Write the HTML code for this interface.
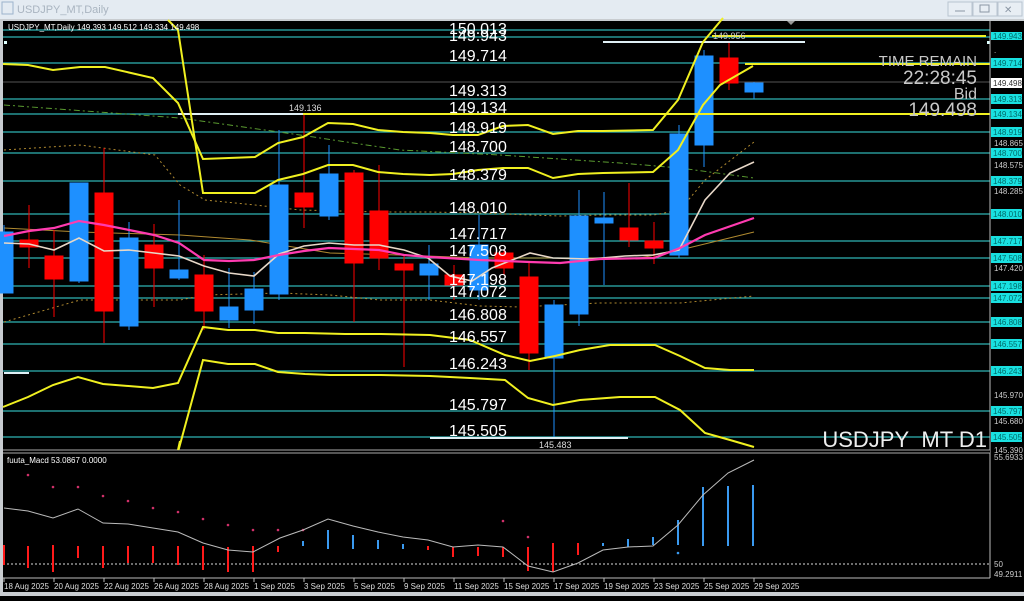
<!DOCTYPE html>
<html><head><meta charset="utf-8">
<style>
html,body{margin:0;padding:0;background:#000;}
body{width:1024px;height:596px;overflow:hidden;font-family:"Liberation Sans",sans-serif;}
svg text{font-family:"Liberation Sans",sans-serif;}
</style></head><body>
<svg width="1024" height="596" viewBox="0 0 1024 596" xmlns="http://www.w3.org/2000/svg">
<!-- title bar -->
<rect x="0" y="0" width="1024" height="19" fill="#e4ebf2"/>
<rect x="2" y="2" width="11" height="12" fill="none" stroke="#9db3cc"/>
<text x="17" y="13" font-size="11" fill="#a9b4c0">USDJPY_MT,Daily</text>
<rect x="948" y="2" width="24" height="14" fill="#e8eef4" stroke="#b9c4d0"/>
<rect x="973" y="2" width="24" height="14" fill="#e8eef4" stroke="#b9c4d0"/>
<rect x="998" y="2" width="24" height="14" fill="#e8eef4" stroke="#b9c4d0"/>
<line x1="955" y1="11" x2="965" y2="11" stroke="#8a96a4"/>
<rect x="980" y="5" width="9" height="7" fill="none" stroke="#8a96a4"/>
<text x="1004" y="13" font-size="10" fill="#8a96a4">✕</text>
<rect x="0" y="19" width="1024" height="2" fill="#c8ccd0"/>
<rect x="0" y="21" width="3" height="575" fill="#c8ccd0"/>
<rect x="0" y="592" width="1024" height="4" fill="#c8ccd0"/>
<rect x="3" y="21" width="1021" height="571" fill="#000"/>

<!-- horizontal level lines -->
<g stroke="#2fb3b3" stroke-width="1.3">
<line x1="3" y1="30" x2="990" y2="30"/><line x1="3" y1="37" x2="990" y2="37"/>
<line x1="3" y1="63" x2="990" y2="63"/><line x1="3" y1="99" x2="990" y2="99"/>
<line x1="3" y1="114" x2="990" y2="114"/><line x1="3" y1="132" x2="990" y2="132"/>
<line x1="3" y1="153" x2="990" y2="153"/><line x1="3" y1="181" x2="990" y2="181"/>
<line x1="3" y1="214" x2="990" y2="214"/><line x1="3" y1="241" x2="990" y2="241"/>
<line x1="3" y1="258" x2="990" y2="258"/><line x1="3" y1="286" x2="990" y2="286"/>
<line x1="3" y1="298" x2="990" y2="298"/><line x1="3" y1="322" x2="990" y2="322"/>
<line x1="3" y1="344" x2="990" y2="344"/><line x1="3" y1="371" x2="990" y2="371"/>
<line x1="3" y1="411" x2="990" y2="411"/><line x1="3" y1="437" x2="990" y2="437"/>
</g>
<line x1="3" y1="82" x2="990" y2="82" stroke="#555" stroke-width="1"/>

<!-- white lines -->
<g stroke="#dfeff5" stroke-width="2">
<line x1="178" y1="114" x2="303" y2="114"/>
<line x1="603" y1="42" x2="805" y2="42"/>
<line x1="430" y1="438" x2="628" y2="438"/>
<line x1="4" y1="373" x2="29" y2="373"/>
</g>
<rect x="4" y="41" width="3" height="3" fill="#dff"/>
<rect x="987" y="41" width="3" height="3" fill="#dff"/>

<!-- dotted / dashdot MAs -->
<polyline fill="none" stroke="#b08a30" stroke-width="1" stroke-dasharray="2,3" points="4,150 80,145 155,155 180,185 205,200 255,205 300,210 380,212 430,212 480,213 530,215 560,216 600,215 654,215 680,210 705,180 754,142"/>
<polyline fill="none" stroke="#b08a30" stroke-width="1" stroke-dasharray="2,3" points="4,322 80,300 180,300 205,295 280,293 330,295 380,300 430,300 480,306 520,307 560,305 600,303 680,303 754,296"/>
<polyline fill="none" stroke="#5a9a30" stroke-width="1" stroke-dasharray="6,3,2,3" points="4,105 180,118 300,135 400,150 500,155 620,163 680,168 754,178"/>
<polyline fill="none" stroke="#b08a30" stroke-width="1" points="4,228 80,232 180,235 250,240 330,253 400,255 480,258 560,258 640,258 680,250 754,232"/>

<!-- candles -->
<g stroke-width="1">
<g stroke="#1e90ff" fill="#1e90ff">
<line x1="4" y1="225" x2="4" y2="293"/><rect x="-5" y="232" width="18" height="61"/>
<line x1="79" y1="183" x2="79" y2="283"/><rect x="70" y="183" width="18" height="98"/>
<line x1="129" y1="222" x2="129" y2="330"/><rect x="120" y="238" width="18" height="88"/>
<line x1="179" y1="200" x2="179" y2="280"/><rect x="170" y="270" width="18" height="8"/>
<line x1="229" y1="268" x2="229" y2="328"/><rect x="220" y="307" width="18" height="13"/>
<line x1="254" y1="272" x2="254" y2="324"/><rect x="245" y="289" width="18" height="21"/>
<line x1="279" y1="130" x2="279" y2="300"/><rect x="270" y="185" width="18" height="109"/>
<line x1="329" y1="145" x2="329" y2="220"/><rect x="320" y="174" width="18" height="42"/>
<line x1="429" y1="245" x2="429" y2="300"/><rect x="420" y="264" width="18" height="11"/>
<line x1="479" y1="215" x2="479" y2="300"/><rect x="470" y="245" width="18" height="45"/>
<line x1="554" y1="300" x2="554" y2="437"/><rect x="545" y="305" width="18" height="53"/>
<line x1="579" y1="190" x2="579" y2="326"/><rect x="570" y="216" width="18" height="98"/>
<line x1="604" y1="192" x2="604" y2="285"/><rect x="595" y="218" width="18" height="5"/>
<line x1="679" y1="125" x2="679" y2="258"/><rect x="670" y="134" width="18" height="121"/>
<line x1="704" y1="50" x2="704" y2="167"/><rect x="695" y="56" width="18" height="89"/>
<line x1="754" y1="82" x2="754" y2="99"/><rect x="745" y="83" width="18" height="9"/>
</g>
<g stroke="#ff0000" fill="#ff0000">
<line x1="29" y1="205" x2="29" y2="268"/><rect x="20" y="240" width="18" height="7"/>
<line x1="54" y1="230" x2="54" y2="317"/><rect x="45" y="256" width="18" height="23"/>
<line x1="104" y1="148" x2="104" y2="343"/><rect x="95" y="193" width="18" height="118"/>
<line x1="154" y1="224" x2="154" y2="307"/><rect x="145" y="245" width="18" height="23"/>
<line x1="204" y1="255" x2="204" y2="330"/><rect x="195" y="275" width="18" height="36"/>
<line x1="304" y1="115" x2="304" y2="228"/><rect x="295" y="193" width="18" height="14"/>
<line x1="354" y1="170" x2="354" y2="322"/><rect x="345" y="173" width="18" height="90"/>
<line x1="379" y1="165" x2="379" y2="270"/><rect x="370" y="211" width="18" height="47"/>
<line x1="404" y1="255" x2="404" y2="367"/><rect x="395" y="264" width="18" height="6"/>
<line x1="454" y1="265" x2="454" y2="300"/><rect x="445" y="275" width="18" height="10"/>
<line x1="504" y1="250" x2="504" y2="275"/><rect x="495" y="253" width="18" height="15"/>
<line x1="529" y1="262" x2="529" y2="370"/><rect x="520" y="277" width="18" height="76"/>
<line x1="629" y1="183" x2="629" y2="247"/><rect x="620" y="228" width="18" height="12"/>
<line x1="654" y1="222" x2="654" y2="264"/><rect x="645" y="241" width="18" height="7"/>
<line x1="729" y1="43" x2="729" y2="90"/><rect x="720" y="58" width="18" height="25"/>
</g>
</g>

<!-- MAs -->
<polyline fill="none" stroke="#e8d8c8" stroke-width="1.6" points="4,243 29,244 54,250 79,238 104,251 129,250 154,253 179,256 204,266 229,273 254,276 279,254 304,246 329,243 354,245 379,245 404,250 428,258 450,276 472,281 492,268 530,253 553,258 590,259 625,256 653,255 679,250 705,200 730,173 754,162"/>
<polyline fill="none" stroke="#ff3bb0" stroke-width="2.2" points="4,236 29,231 54,228 79,221 104,225 129,230 154,235 179,243 204,260 229,261 254,260 279,255 304,251 329,248 354,249 379,250 404,255 430,257 480,260 530,262 560,263 600,259 654,258 680,248 705,235 754,218"/>

<!-- envelope yellow -->
<g fill="none" stroke="#f0f020" stroke-width="2">
<polyline points="3,64 28,65 53,70 80,67 105,67 153,78 178,103 203,159 255,157 278,143 303,137 328,123 353,124 378,130 403,132 430,133 453,135 478,135 503,126 528,125 553,134 578,131 603,131 653,130 678,100 703,42 723,18"/>
<polyline points="168,20 178,30 203,193 255,193 278,180 303,174 328,165 353,165 378,172 403,174 430,175 453,174 478,170 503,168 528,168 553,178 578,174 603,173 653,172 678,150 703,105 720,85 753,66"/>
<polyline points="3,407 28,397 53,385 78,377 103,384 153,388 178,383 203,327 228,330 255,330 278,333 305,333 345,334 380,334 430,335 470,340 505,355 530,361 555,356 580,350 610,345 655,345 680,356 705,368 730,370 754,370"/>
<polyline points="178,452 203,360 228,364 255,364 278,372 305,374 330,375 380,375 430,376 470,378 505,380 528,398 553,405 580,400 620,397 655,397 680,410 705,433 730,440 754,447"/>
<line x1="303" y1="114" x2="990" y2="114"/>
<line x1="745" y1="64" x2="990" y2="64"/>
<line x1="712" y1="36" x2="986" y2="36"/>
</g>

<!-- small labels -->
<text x="8" y="30" font-size="8" fill="#fff">USDJPY_MT,Daily  149.393 149.512 149.334 149.498</text>
<text x="289" y="111" font-size="9" fill="#ddd">149.136</text>
<text x="713" y="39" font-size="9" fill="#ccc">149.956</text>
<text x="539" y="448" font-size="9" fill="#ddd">145.483</text>
<polygon points="787,21 795,21 791,25" fill="#999"/>

<!-- center level labels -->
<g font-size="16" fill="#ffffff">
<text x="449" y="34">150.013</text><text x="449" y="41">149.943</text>
<text x="449" y="61">149.714</text><text x="449" y="96">149.313</text>
<text x="449" y="113">149.134</text><text x="449" y="133">148.919</text>
<text x="449" y="152">148.700</text><text x="449" y="180">148.379</text>
<text x="449" y="213">148.010</text><text x="449" y="239">147.717</text>
<text x="449" y="256">147.508</text><text x="449" y="285">147.198</text>
<text x="449" y="297">147.072</text><text x="449" y="320">146.808</text>
<text x="449" y="342">146.557</text><text x="449" y="369">146.243</text>
<text x="449" y="410">145.797</text><text x="449" y="436">145.505</text>
</g>

<!-- time remain -->
<g fill="#c8c8c8" text-anchor="end">
<text x="977" y="66" font-size="15">TIME REMAIN</text>
<text x="977" y="84" font-size="19">22:28:45</text>
<text x="977" y="99" font-size="16">Bid</text>
<text x="977" y="116" font-size="19">149.498</text>
<text x="987" y="447" font-size="22" fill="#eee">USDJPY_MT D1</text>
</g>

<!-- right axis -->
<rect x="990" y="21" width="34" height="571" fill="#000"/>
<line x1="990" y1="21" x2="990" y2="578" stroke="#bbb"/>
<g font-size="8" fill="#ccc">
<text x="994" y="53">.</text>
<text x="994" y="146">148.865</text><text x="994" y="168">148.575</text>
<text x="994" y="194">148.285</text><text x="994" y="271">147.420</text>
<text x="994" y="398">145.970</text><text x="994" y="424">145.680</text>
<text x="994" y="453">145.390</text><text x="994" y="460">55.6933</text>
<text x="994" y="567">50</text><text x="994" y="577">49.2911</text>
</g>
<g font-size="8" fill="#006a6a">
<rect x="991" y="32" width="31" height="8" fill="#19e0e0"/><text x="993" y="39">149.943</text>
<rect x="991" y="58" width="31" height="10" fill="#19e0e0"/><text x="993" y="66">149.714</text>
<rect x="991" y="78" width="31" height="10" fill="#fff"/><text x="993" y="86" fill="#333">149.498</text>
<rect x="991" y="94" width="31" height="10" fill="#19e0e0"/><text x="993" y="102">149.313</text>
<rect x="991" y="109" width="31" height="10" fill="#19e0e0"/><text x="993" y="117">149.134</text>
<rect x="991" y="127" width="31" height="10" fill="#19e0e0"/><text x="993" y="135">148.919</text>
<rect x="991" y="148" width="31" height="10" fill="#19e0e0"/><text x="993" y="156">148.700</text>
<rect x="991" y="176" width="31" height="10" fill="#19e0e0"/><text x="993" y="184">148.379</text>
<rect x="991" y="209" width="31" height="10" fill="#19e0e0"/><text x="993" y="217">148.010</text>
<rect x="991" y="236" width="31" height="10" fill="#19e0e0"/><text x="993" y="244">147.717</text>
<rect x="991" y="253" width="31" height="10" fill="#19e0e0"/><text x="993" y="261">147.508</text>
<rect x="991" y="281" width="31" height="10" fill="#19e0e0"/><text x="993" y="289">147.198</text>
<rect x="991" y="293" width="31" height="10" fill="#19e0e0"/><text x="993" y="301">147.072</text>
<rect x="991" y="317" width="31" height="10" fill="#19e0e0"/><text x="993" y="325">146.808</text>
<rect x="991" y="339" width="31" height="10" fill="#19e0e0"/><text x="993" y="347">146.557</text>
<rect x="991" y="366" width="31" height="10" fill="#19e0e0"/><text x="993" y="374">146.243</text>
<rect x="991" y="406" width="31" height="10" fill="#19e0e0"/><text x="993" y="414">145.797</text>
<rect x="991" y="432" width="31" height="10" fill="#19e0e0"/><text x="993" y="440">145.505</text>
</g>

<!-- separator -->
<rect x="3" y="450" width="987" height="3" fill="#000"/>
<line x1="3" y1="450" x2="990" y2="450" stroke="#aaa" stroke-width="1"/>
<line x1="3" y1="453" x2="990" y2="453" stroke="#aaa" stroke-width="1"/>
<line x1="180" y1="441" x2="178" y2="450" stroke="#f0f020" stroke-width="2"/>

<!-- MACD panel -->
<text x="7" y="463" font-size="8" fill="#fff">fuuta_Macd 53.0867   0.0000</text>
<line x1="3" y1="564" x2="990" y2="564" stroke="#ddd" stroke-dasharray="2,2"/>
<g stroke="#ff1a1a" stroke-width="2">
<line x1="4" y1="545" x2="4" y2="565"/><line x1="28" y1="546" x2="28" y2="568"/>
<line x1="53" y1="545" x2="53" y2="572"/><line x1="78" y1="546" x2="78" y2="558"/>
<line x1="103" y1="546" x2="103" y2="568"/><line x1="128" y1="546" x2="128" y2="563"/>
<line x1="153" y1="546" x2="153" y2="563"/><line x1="178" y1="546" x2="178" y2="565"/>
<line x1="203" y1="546" x2="203" y2="570"/><line x1="228" y1="547" x2="228" y2="572"/>
<line x1="253" y1="546" x2="253" y2="572"/><line x1="278" y1="546" x2="278" y2="552"/>
<line x1="428" y1="546" x2="428" y2="550"/><line x1="453" y1="547" x2="453" y2="557"/>
<line x1="478" y1="547" x2="478" y2="556"/><line x1="503" y1="547" x2="503" y2="557"/>
<line x1="528" y1="547" x2="528" y2="571"/><line x1="553" y1="543" x2="553" y2="572"/>
<line x1="578" y1="543" x2="578" y2="555"/>
</g>
<g stroke="#3a9af0" stroke-width="2">
<line x1="303" y1="541" x2="303" y2="546"/><line x1="328" y1="530" x2="328" y2="549"/>
<line x1="353" y1="535" x2="353" y2="549"/><line x1="378" y1="540" x2="378" y2="549"/>
<line x1="403" y1="544" x2="403" y2="549"/><line x1="603" y1="543" x2="603" y2="546"/>
<line x1="628" y1="539" x2="628" y2="547"/><line x1="653" y1="537" x2="653" y2="545"/>
<line x1="678" y1="520" x2="678" y2="545"/><line x1="703" y1="487" x2="703" y2="546"/>
<line x1="728" y1="486" x2="728" y2="546"/><line x1="753" y1="485" x2="753" y2="546"/>
</g>
<g fill="#d0306a">
<circle cx="28" cy="475" r="1.3"/><circle cx="53" cy="487" r="1.3"/><circle cx="78" cy="487" r="1.3"/>
<circle cx="103" cy="496" r="1.3"/><circle cx="128" cy="501" r="1.3"/><circle cx="153" cy="508" r="1.3"/>
<circle cx="178" cy="512" r="1.3"/><circle cx="203" cy="519" r="1.3"/><circle cx="228" cy="525" r="1.3"/>
<circle cx="253" cy="530" r="1.3"/><circle cx="278" cy="530" r="1.3"/><circle cx="303" cy="530" r="1.3"/>
<circle cx="503" cy="521" r="1.3"/><circle cx="528" cy="537" r="1.3"/>
</g>
<circle cx="678" cy="553" r="1.3" fill="#3a9af0"/>
<polyline fill="none" stroke="#bbb" stroke-width="1" points="4,508 28,511 53,518 78,509 103,523 128,524 153,528 178,532 203,543 228,550 253,552 280,538 303,530 328,519 353,526 378,532 403,537 428,540 453,547 478,545 503,547 528,566 553,572 578,563 603,550 628,547 653,546 678,525 703,495 728,473 754,460"/>

<!-- date axis -->
<line x1="3" y1="578" x2="990" y2="578" stroke="#bbb"/>
<g stroke="#bbb">
<line x1="4" y1="578" x2="4" y2="582"/><line x1="54" y1="578" x2="54" y2="582"/><line x1="104" y1="578" x2="104" y2="582"/>
<line x1="154" y1="578" x2="154" y2="582"/><line x1="204" y1="578" x2="204" y2="582"/><line x1="254" y1="578" x2="254" y2="582"/>
<line x1="304" y1="578" x2="304" y2="582"/><line x1="354" y1="578" x2="354" y2="582"/><line x1="404" y1="578" x2="404" y2="582"/>
<line x1="454" y1="578" x2="454" y2="582"/><line x1="504" y1="578" x2="504" y2="582"/><line x1="554" y1="578" x2="554" y2="582"/>
<line x1="604" y1="578" x2="604" y2="582"/><line x1="654" y1="578" x2="654" y2="582"/><line x1="704" y1="578" x2="704" y2="582"/>
<line x1="754" y1="578" x2="754" y2="582"/>
</g>
<g font-size="8" fill="#ddd">
<text x="4" y="589">18 Aug 2025</text><text x="54" y="589">20 Aug 2025</text><text x="104" y="589">22 Aug 2025</text>
<text x="154" y="589">26 Aug 2025</text><text x="204" y="589">28 Aug 2025</text><text x="254" y="589">1 Sep 2025</text>
<text x="304" y="589">3 Sep 2025</text><text x="354" y="589">5 Sep 2025</text><text x="404" y="589">9 Sep 2025</text>
<text x="454" y="589">11 Sep 2025</text><text x="504" y="589">15 Sep 2025</text><text x="554" y="589">17 Sep 2025</text>
<text x="604" y="589">19 Sep 2025</text><text x="654" y="589">23 Sep 2025</text><text x="704" y="589">25 Sep 2025</text>
<text x="754" y="589">29 Sep 2025</text>
</g>
</svg>
</body></html>
